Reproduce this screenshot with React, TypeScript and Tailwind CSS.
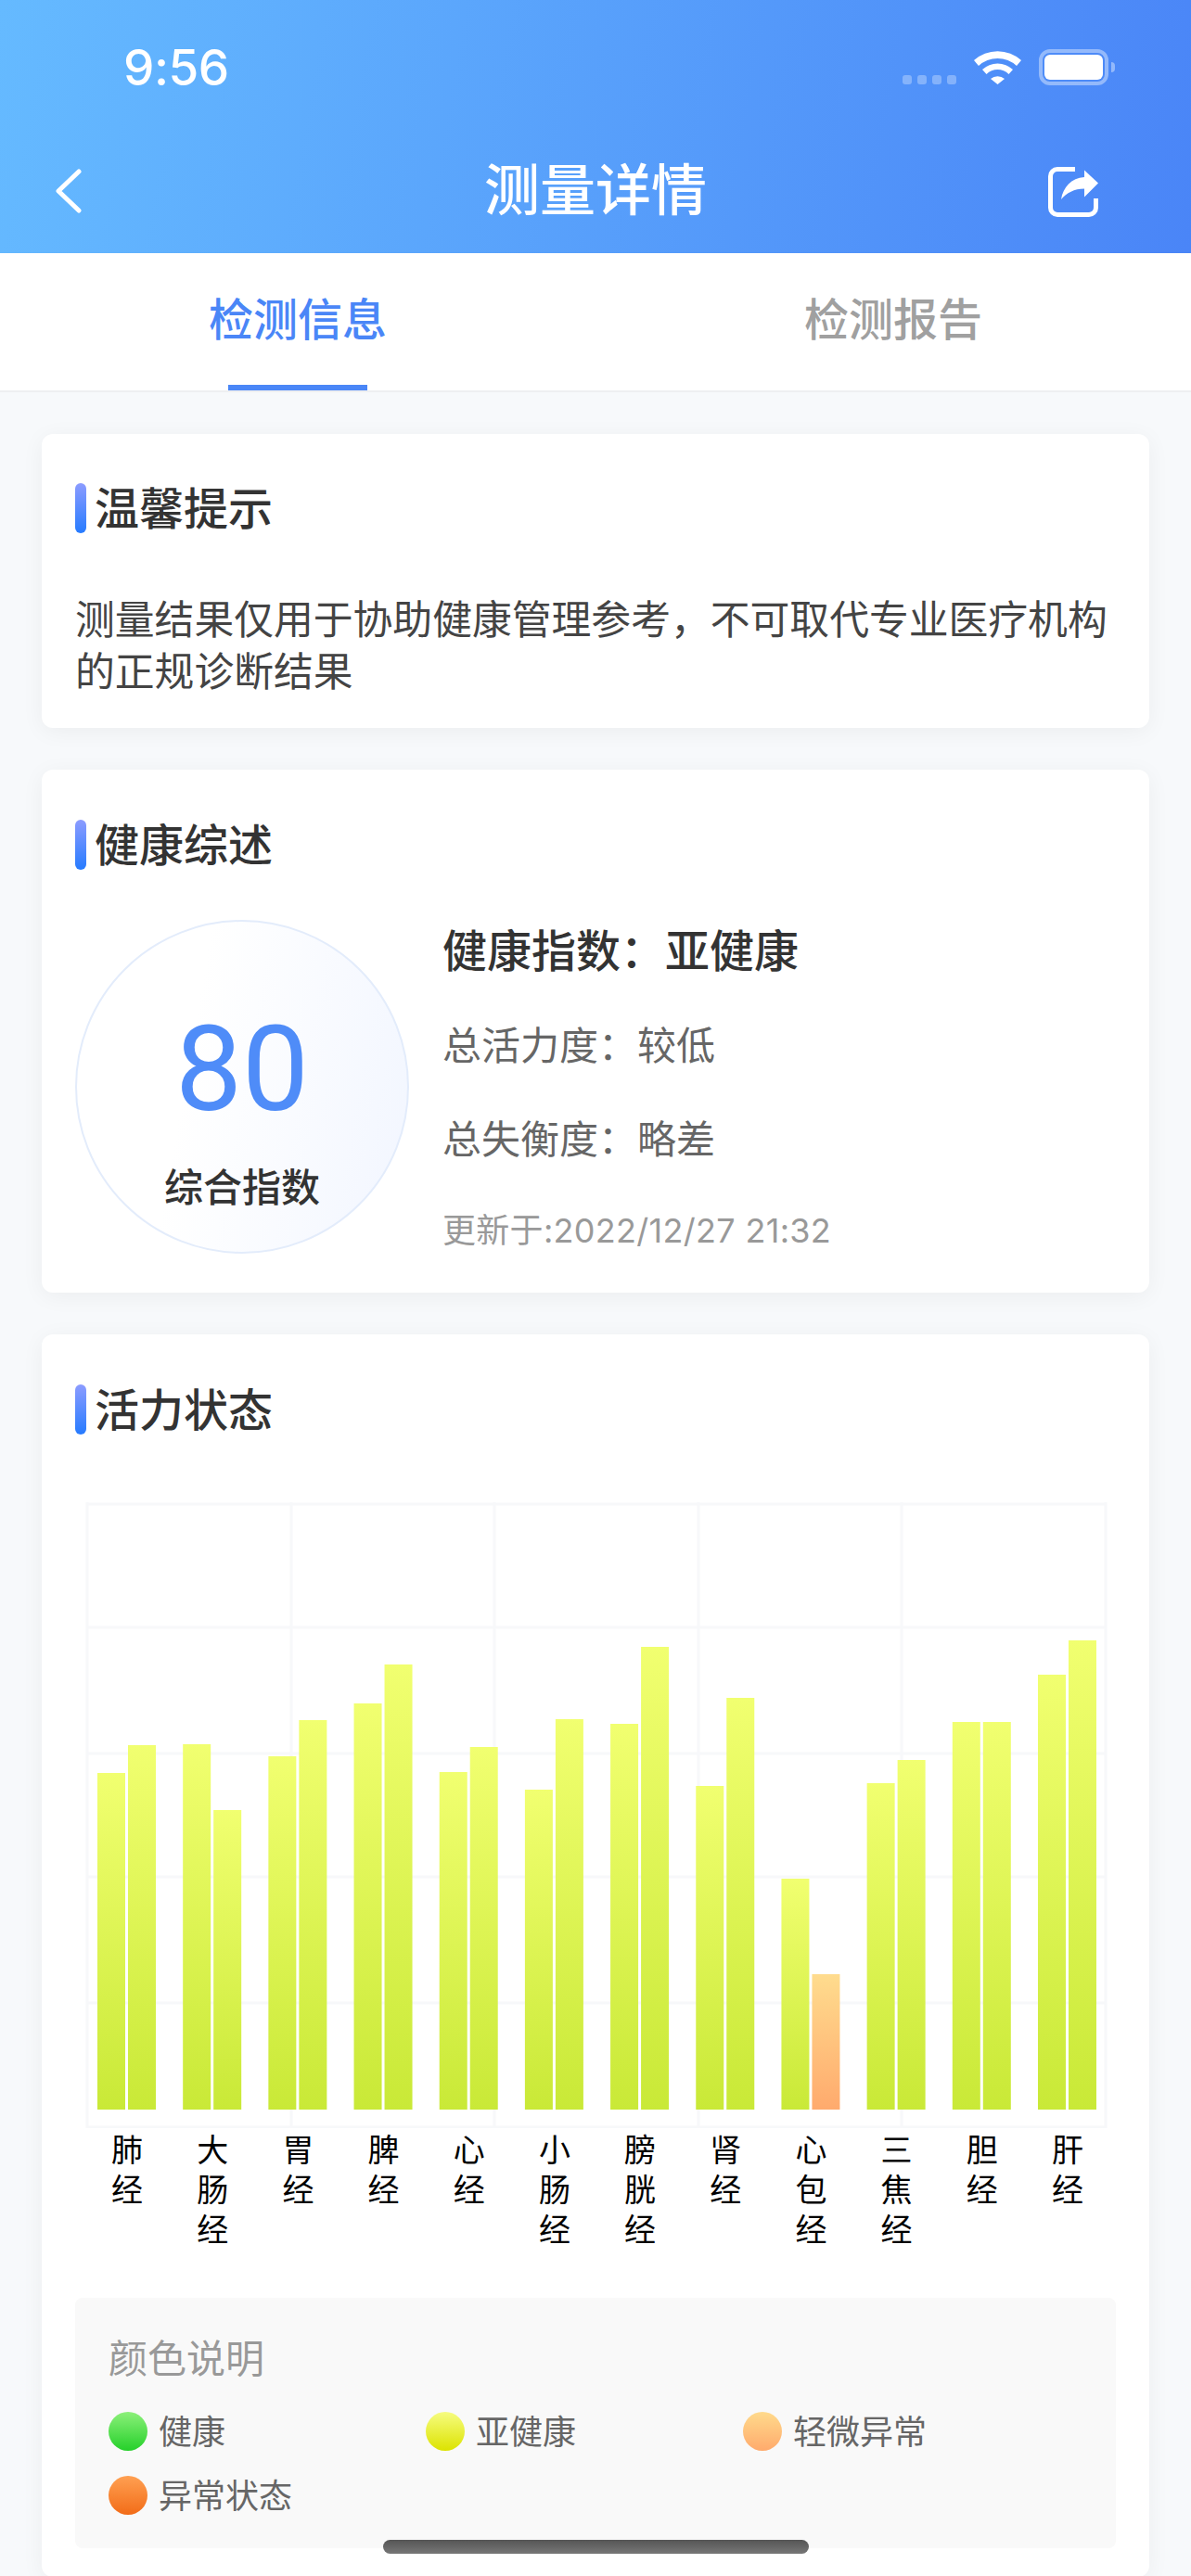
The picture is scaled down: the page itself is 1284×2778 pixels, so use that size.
import React from 'react';

const meridians = [
  { name: '肺经', tops: [1911, 1881] },
  { name: '大肠经', tops: [1880, 1951] },
  { name: '胃经', tops: [1893, 1854] },
  { name: '脾经', tops: [1836, 1794] },
  { name: '心经', tops: [1910, 1883] },
  { name: '小肠经', tops: [1929, 1853] },
  { name: '膀胱经', tops: [1858, 1775] },
  { name: '肾经', tops: [1925, 1830] },
  { name: '心包经', tops: [2025, 2128] },
  { name: '三焦经', tops: [1922, 1897] },
  { name: '胆经', tops: [1856, 1856] },
  { name: '肝经', tops: [1805, 1768] },
];

const legend = [
  { label: '健康', dot: 'bg-[linear-gradient(180deg,#8cf07a,#25d02a)]' },
  { label: '亚健康', dot: 'bg-[linear-gradient(180deg,#f6fc80,#dce300)]' },
  { label: '轻微异常', dot: 'bg-[linear-gradient(180deg,#ffda8c,#ffaa6c)]' },
  { label: '异常状态', dot: 'bg-[linear-gradient(180deg,#ffa052,#f26c18)]' },
];

const SectionTitle: React.FC<{ title: string }> = ({ title }) => (
  <div className="flex items-center gap-[9px]">
    <div className="w-[12px] h-[54px] rounded-full bg-[linear-gradient(180deg,#8c9cff,#267bff)]"></div>
    <h2 className="mb-[5px] text-[48px] leading-[49px] font-medium text-[#333333]">{title}</h2>
  </div>
);

const StatusBar: React.FC = () => (
  <div className="h-[148px] flex items-start justify-between pl-[133px] pr-[82px] pt-[53px]">
    <span className="font-['Inter',sans-serif] text-[53px] leading-[41px] font-medium tracking-[-0.5px] text-white">9:56</span>
    <div className="flex items-end">
      <div className="flex gap-[6px] mb-[1px]">
        <div className="w-[10px] h-[10px] rounded-[3px] bg-white/30"></div>
        <div className="w-[10px] h-[10px] rounded-[3px] bg-white/30"></div>
        <div className="w-[10px] h-[10px] rounded-[3px] bg-white/30"></div>
        <div className="w-[10px] h-[10px] rounded-[3px] bg-white/30"></div>
      </div>
      <svg className="ml-[19px] mb-[1px]" width="51" height="37" viewBox="0 0 51 37" fill="white">
        <path d="M0 11A38 38 0 0 1 51 11L46 17A30 30 0 0 0 5 17Z" />
        <path d="M9 21A24 24 0 0 1 42 21L37.5 26A17 17 0 0 0 13.5 26Z" />
        <path d="M18 31A12 12 0 0 1 33 31L25.5 37Z" />
      </svg>
      <div className="ml-[19px] w-[75px] h-[39px] rounded-[12px] border-[4px] border-white/40 p-[2px]">
        <div className="w-full h-full rounded-[6px] bg-white"></div>
      </div>
      <div className="ml-[3px] mb-[14px] w-[4px] h-[11px] rounded-r-full bg-white/40"></div>
    </div>
  </div>
);

const NavBar: React.FC = () => (
  <div className="h-[125px] flex items-start justify-between pl-[60px] pr-[99px] relative">
    <svg className="mt-[34px]" width="28" height="48" viewBox="0 0 28 48" fill="none" stroke="white" strokeWidth="5" strokeLinecap="round" strokeLinejoin="round">
      <path d="M25 3L3 24L25 45" />
    </svg>
    <h1 className="absolute left-0 right-0 top-[15px] text-center text-[60px] leading-[76px] font-medium text-white">测量详情</h1>
    <svg className="mt-[32px]" width="55" height="54" viewBox="0 0 55 54" fill="none">
      <path d="M29 2.5H10A7.5 7.5 0 0 0 2.5 10V44A7.5 7.5 0 0 0 10 51.5H44A7.5 7.5 0 0 0 51.5 44V34" stroke="white" strokeWidth="5" />
      <path d="M54 17.5L39 3.5V11C25 12 16 22 14 35C20 28 28 23.5 39 23.5V32.5Z" fill="white" />
    </svg>
  </div>
);

const ChartBars: React.FC = () => {
  const baseY = 2274;
  const originY = 1619;
  const originX = 81;
  const hLines = [1621, 1754, 1890, 2023, 2159, 2293];
  const vLines = [94, 314, 533, 753, 972, 1192];

  return (
    <svg className="mt-[73px] block" width="1122" height="675" viewBox="0 0 1122 675">
      <defs>
        <linearGradient id="barGreen" x1="0" y1="0" x2="0" y2="1">
          <stop offset="0" stopColor="#f1ff70" />
          <stop offset="1" stopColor="#c9e937" />
        </linearGradient>
        <linearGradient id="barOrange" x1="0" y1="0" x2="0" y2="1">
          <stop offset="0" stopColor="#ffdc8e" />
          <stop offset="1" stopColor="#ffaa6d" />
        </linearGradient>
      </defs>
      {hLines.map((y) => (
        <line key={y} x1={vLines[0] - originX - 1} x2={vLines[5] - originX + 1} y1={y - originY} y2={y - originY} stroke="#f7f8fa" strokeWidth="3" />
      ))}
      {vLines.map((x) => (
        <line key={x} x1={x - originX} x2={x - originX} y1={0} y2={675} stroke="#f7f8fa" strokeWidth="3" />
      ))}
      {meridians.map((m, i) =>
        m.tops.map((top, j) => (
          <rect
            key={`${m.name}-${j}`}
            x={105 + i * 92.18 + j * 33 - originX}
            y={top - originY}
            width="30"
            height={baseY - top}
            fill={top === 2128 ? 'url(#barOrange)' : 'url(#barGreen)'}
          />
        ))
      )}
    </svg>
  );
};

function App() {
  return (
    <div className="relative w-[1284px] h-[2778px] overflow-hidden bg-[#f7f9fb] font-['Noto_Sans_CJK_SC',sans-serif]">
      <header className="h-[273px] bg-[linear-gradient(100deg,#65baff,#4a85f7)]">
        <StatusBar />
        <NavBar />
      </header>

      <div className="relative flex h-[150px] bg-white border-b-2 border-[#eeeff1]">
        <div className="flex-1 flex justify-center pt-[36px] text-[48px] leading-[64px] font-medium text-[#4a86f7]">检测信息</div>
        <div className="flex-1 flex justify-center pt-[36px] text-[48px] leading-[64px] font-medium text-[#a0a0a0]">检测报告</div>
        <div className="absolute left-[246px] bottom-0 w-[150px] h-[6px] bg-[#4a86f7]"></div>
      </div>

      <div className="flex flex-col gap-[45px] px-[45px] pt-[45px]">
        <section className="h-[317px] rounded-[12px] bg-white px-[36px] pt-[53px] shadow-[0_4px_24px_rgba(0,0,0,0.05)]">
          <SectionTitle title="温馨提示" />
          <p className="mt-[62px] text-[42.8px] leading-[56px] text-[#444444]">
            测量结果仅用于协助健康管理参考，不可取代专业医疗机构的正规诊断结果
          </p>
        </section>

        <section className="h-[564px] rounded-[12px] bg-white px-[36px] pt-[54px] shadow-[0_4px_24px_rgba(0,0,0,0.05)]">
          <SectionTitle title="健康综述" />
          <div className="mt-[54px] flex gap-[36px]">
            <div className="w-[360px] h-[360px] rounded-full border-2 border-[#e3ecfb] bg-[linear-gradient(100deg,#ffffff_35%,#f2f6ff)] flex flex-col items-center">
              <div className="mt-[87px] font-['Roboto',sans-serif] text-[128px] leading-[144px] font-normal text-[#4f8cf8]">80</div>
              <div className="mt-[25px] text-[42px] leading-[56px] font-medium text-[#333333]">综合指数</div>
            </div>
            <div className="flex flex-col gap-[45px]">
              <div className="text-[48px] leading-[60px] font-medium text-[#333333]">健康指数：亚健康</div>
              <div className="text-[42px] leading-[56px] text-[#666666]">总活力度：较低</div>
              <div className="text-[42px] leading-[56px] text-[#666666]">总失衡度：略差</div>
              <div className="pt-[3px] font-['Inter','Noto_Sans_CJK_SC',sans-serif] text-[36px] leading-[50px] tracking-[0.3px] text-[#999999]">更新于:2022/12/27 21:32</div>
            </div>
          </div>
        </section>

        <section className="h-[1340px] rounded-[12px] bg-white px-[36px] pt-[54px] shadow-[0_4px_24px_rgba(0,0,0,0.05)]">
          <SectionTitle title="活力状态" />
          <ChartBars />
          <div className="ml-[10px] w-[1106px] h-[129px] grid grid-cols-12">
            {meridians.map((m) => (
              <div key={m.name} className="mx-auto w-[34px] text-center text-[34px] leading-[43px] text-black">
                {m.name}
              </div>
            ))}
          </div>
          <div className="mt-[54px] h-[270px] rounded-[8px] bg-[#f9f9f9] pl-[36px] pt-[38px]">
            <div className="text-[42px] leading-[50px] text-[#999999]">颜色说明</div>
            <div className="mt-[35px] grid grid-cols-[342px_342px_342px] gap-y-[27px]">
              {legend.map((item) => (
                <div key={item.label} className="flex items-center gap-[12px] h-[42px]">
                  <div className={`w-[42px] h-[42px] rounded-full ${item.dot}`}></div>
                  <span className="mb-[4px] text-[36px] leading-[42px] text-[#666666]">{item.label}</span>
                </div>
              ))}
            </div>
          </div>
        </section>
      </div>

      <div className="absolute left-[413px] top-[2739px] w-[459px] h-[15px] rounded-[8px] bg-[linear-gradient(180deg,#555555,#777777)]"></div>
    </div>
  );
}

export default App;
